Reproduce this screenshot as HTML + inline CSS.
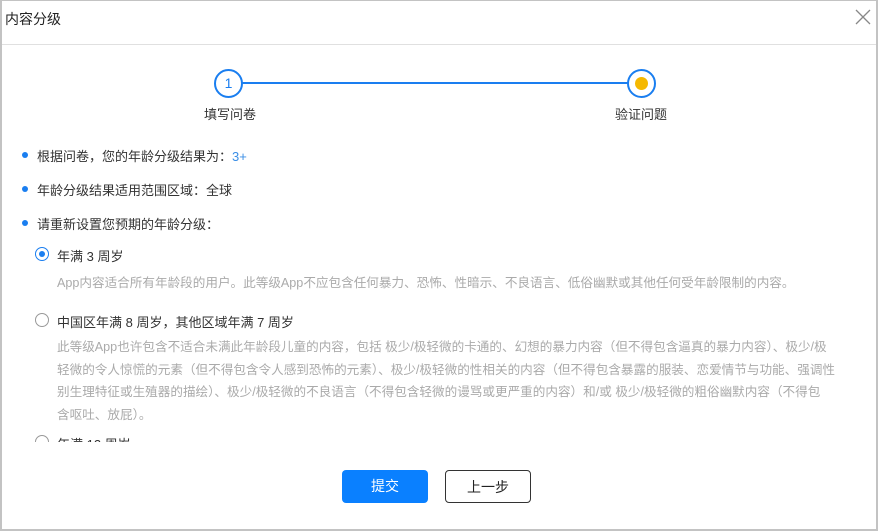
<!DOCTYPE html>
<html><head><meta charset="utf-8"><style>
*{margin:0;padding:0;box-sizing:border-box}
body{width:878px;height:531px;background:#fff;font-family:"Liberation Sans","Noto Sans CJK SC",sans-serif;position:relative;overflow:hidden;color:#333}
.frame{position:absolute;left:0;top:0;width:878px;height:531px;border:2px solid #c3c3c3;border-top-width:1px}
.t{position:absolute;white-space:nowrap}
.hdr{position:absolute;left:2px;right:2px;top:44px;height:1px;background:#e0e0e0}
.circ{position:absolute;width:29px;height:29px;border:2px solid #1a7ef0;border-radius:50%;background:#fff}
.dot{position:absolute;width:6px;height:6px;border-radius:50%;background:#1a7ef0}
.desc{position:absolute;left:57px;width:800px;font-size:12.6px;line-height:22.5px;color:#aaa;white-space:nowrap}
.btn{position:absolute;top:470px;width:86px;height:33px;border-radius:4px;font-size:14px;text-align:center;line-height:33px}
</style></head><body>
<div class="frame"></div>
<div class="t" style="left:5px;top:9px;font-size:14px;color:#222">内容分级</div>
<svg style="position:absolute;left:855px;top:9px" width="16" height="16"><path d="M1 1L15 15M15 1L1 15" stroke="#888" stroke-width="1.3"/></svg>
<div class="hdr"></div>
<div style="position:absolute;left:242px;top:82px;width:386px;height:2px;background:#1a7ef0"></div>
<div class="circ" style="left:214px;top:69px;color:#1a7ef0;font-size:14px;text-align:center;line-height:25px">1</div>
<div class="circ" style="left:627px;top:69px"><div style="position:absolute;left:6px;top:6px;width:13px;height:13px;border-radius:50%;background:#f5b800"></div></div>
<div class="t" style="left:204px;top:104px;font-size:13px">填写问卷</div>
<div class="t" style="left:615px;top:104px;font-size:13px">验证问题</div>
<div class="dot" style="left:22px;top:152px"></div>
<div class="t" style="left:37px;top:146px;font-size:13px">根据问卷，您的年龄分级结果为：<span style="color:#3a8ee6">3+</span></div>
<div class="dot" style="left:22px;top:186px"></div>
<div class="t" style="left:37px;top:180px;font-size:13px">年龄分级结果适用范围区域：全球</div>
<div class="dot" style="left:22px;top:220px"></div>
<div class="t" style="left:37px;top:214px;font-size:13px">请重新设置您预期的年龄分级：</div>
<div style="position:absolute;left:35px;top:247px;width:14px;height:14px;border:1px solid #1a7ef0;border-radius:50%"><div style="position:absolute;left:3px;top:3px;width:6px;height:6px;border-radius:50%;background:#1a7ef0"></div></div>
<div class="t" style="left:57px;top:246px;font-size:13px">年满 3 周岁</div>
<div class="desc" style="top:272px">App内容适合所有年龄段的用户。此等级App不应包含任何暴力、恐怖、性暗示、不良语言、低俗幽默或其他任何受年龄限制的内容。</div>
<div style="position:absolute;left:35px;top:313px;width:14px;height:14px;border:1px solid #999;border-radius:50%"></div>
<div class="t" style="left:57px;top:312px;font-size:13px">中国区年满 8 周岁，其他区域年满 7 周岁</div>
<div class="desc" style="top:336px">此等级App也许包含不适合未满此年龄段儿童的内容，包括 极少/极轻微的卡通的、幻想的暴力内容（但不得包含逼真的暴力内容）、极少/极<br>轻微的令人惊慌的元素（但不得包含令人感到恐怖的元素）、极少/极轻微的性相关的内容（但不得包含暴露的服装、恋爱情节与功能、强调性<br>别生理特征或生殖器的描绘）、极少/极轻微的不良语言（不得包含轻微的谩骂或更严重的内容）和/或 极少/极轻微的粗俗幽默内容（不得包<br>含呕吐、放屁）。</div>
<div style="position:absolute;left:0;top:432px;width:878px;height:10px;overflow:hidden">
<div style="position:absolute;left:35px;top:3px;width:14px;height:14px;border:1px solid #999;border-radius:50%"></div>
<div class="t" style="left:57px;top:2px;font-size:13px">年满 12 周岁</div></div>
<div class="btn" style="left:342px;background:#0a80ff;color:#fff">提交</div>
<div class="btn" style="left:445px;border:1px solid #333;color:#222">上一步</div>
</body></html>
